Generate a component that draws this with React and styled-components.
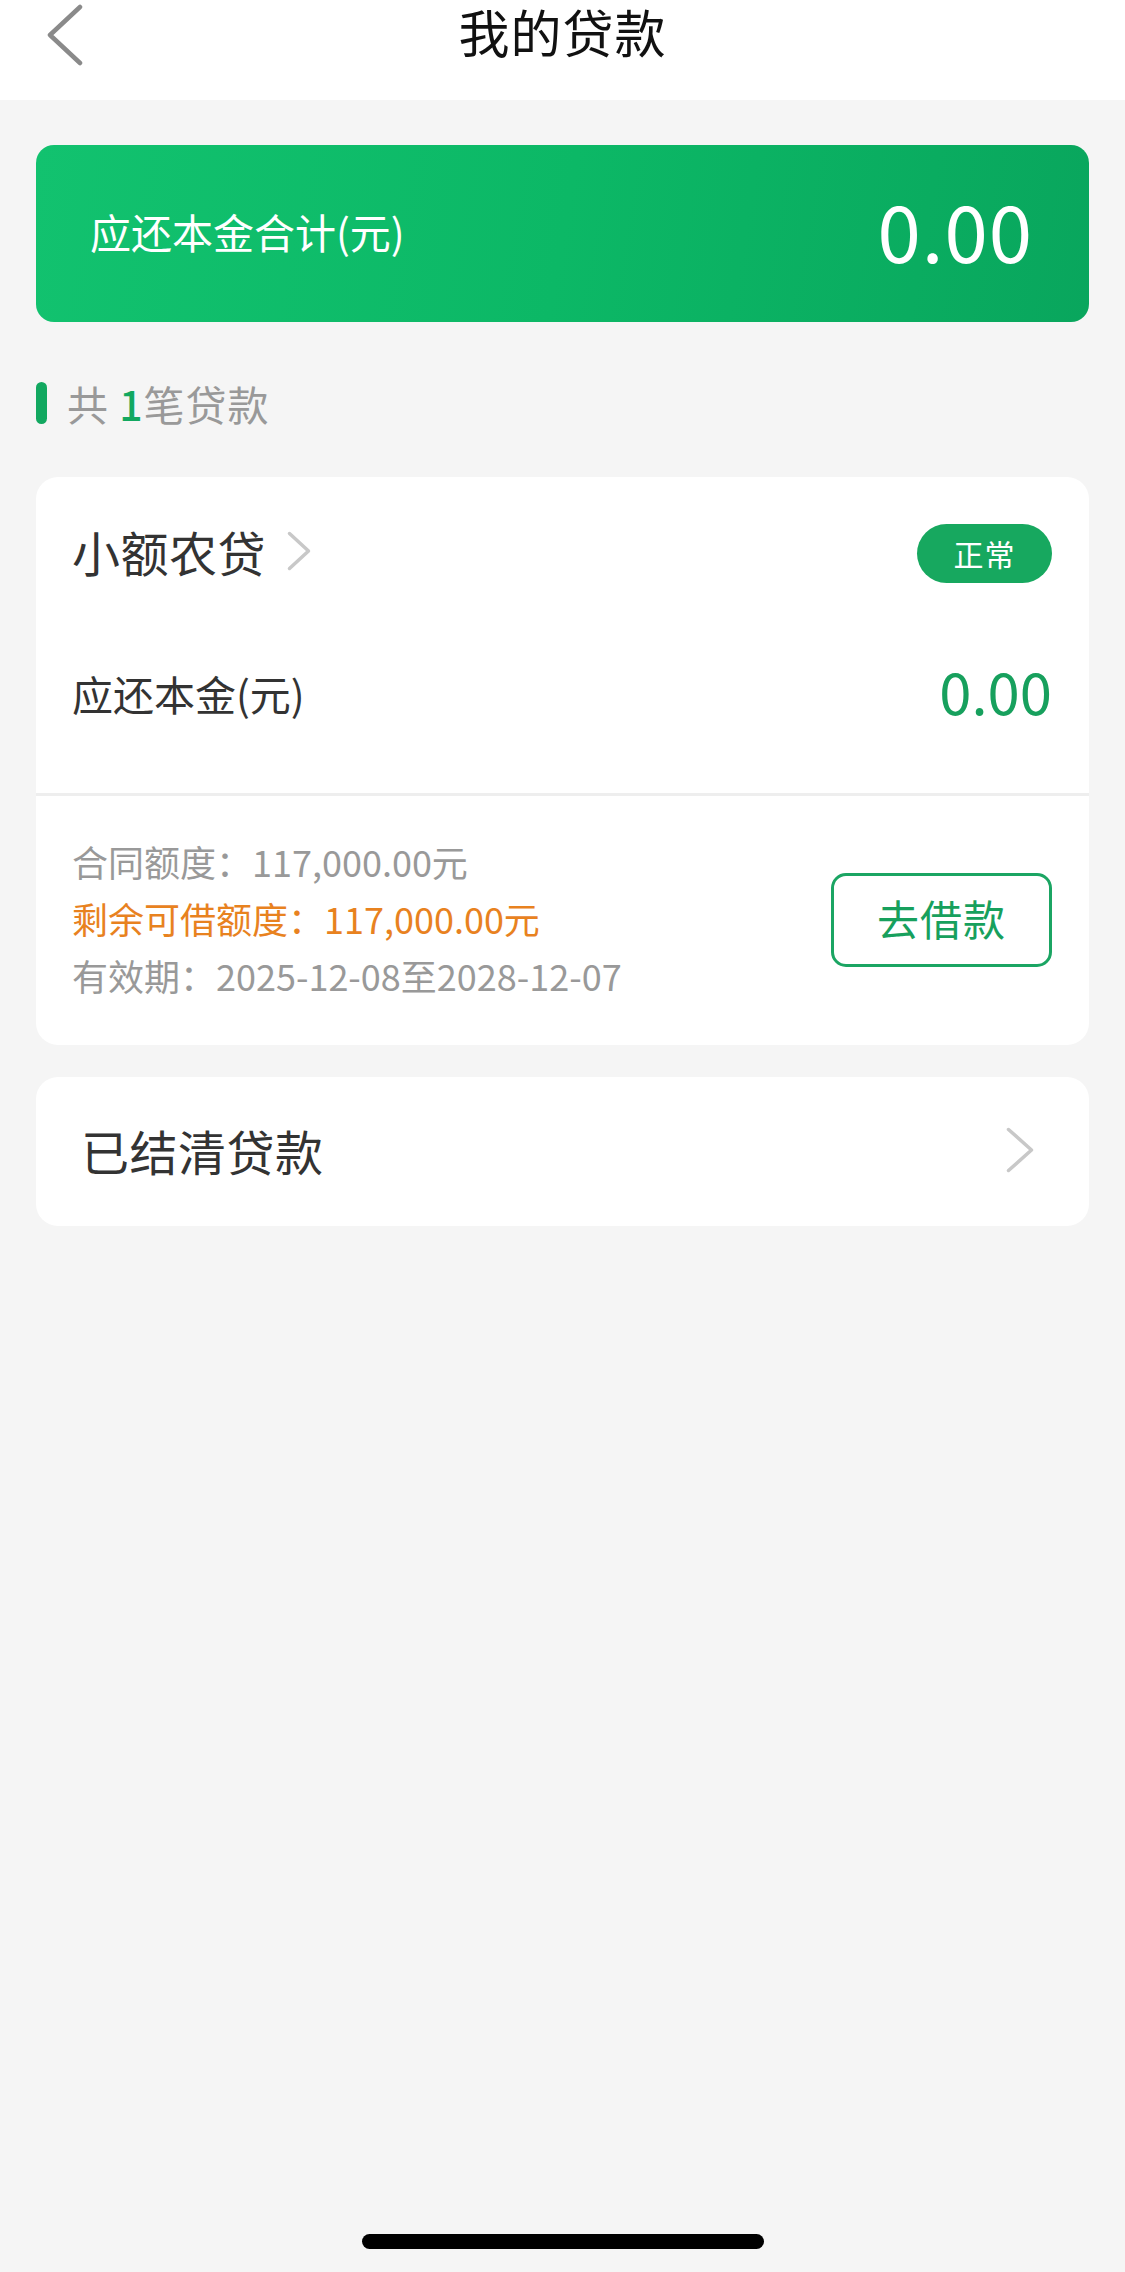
import React from "react";
import styled, { createGlobalStyle } from "styled-components";

const Global = createGlobalStyle`
  html, body { margin: 0; padding: 0; background: #f5f5f5; }
  body { font-family: "Noto Sans CJK SC", "Noto Sans", sans-serif; -webkit-font-smoothing: antialiased; }
  * { box-sizing: border-box; }
`;

const Page = styled.div`
  position: relative;
  width: 1125px;
  min-height: 2272px;
  background: #f5f5f5;
  overflow: hidden;
`;

const Header = styled.header`
  position: relative;
  height: 100px;
  background: #ffffff;
  display: flex;
  justify-content: center;
  align-items: flex-start;
`;

const BackButton = styled.button`
  position: absolute;
  left: 44px;
  top: 2px;
  width: 42px;
  height: 66px;
  padding: 0;
  border: 0;
  background: transparent;
  display: flex;
  align-items: center;
  justify-content: center;
`;

const Title = styled.h1`
  margin: 0;
  padding-top: 4px;
  font-size: 51px;
  line-height: 54px;
  font-weight: 400;
  color: #111;
  letter-spacing: 1px;
`;

const Main = styled.main`
  padding: 45px 36px 0;
  display: flex;
  flex-direction: column;
`;

const SummaryCard = styled.section`
  height: 177px;
  border-radius: 18px;
  background: linear-gradient(100deg, #12c26f 0%, #0cb866 50%, #09a65d 100%);
  display: flex;
  align-items: center;
  justify-content: space-between;
  padding: 0 56px 0 54px;
  color: #fff;
`;

const SummaryLabel = styled.span`
  font-size: 41px;
  font-weight: 400;
  margin-bottom: 6px;
`;

const SummaryValue = styled.span`
  font-size: 78px;
  font-weight: 400;
  letter-spacing: 1px;
  line-height: 1;
  margin-bottom: 10px;
`;

const SectionHead = styled.div`
  margin-top: 60px;
  height: 42px;
  display: flex;
  align-items: center;
  gap: 20px;
`;

const SectionBar = styled.span`
  width: 11px;
  height: 42px;
  border-radius: 6px;
  background: #12a860;
`;

const SectionText = styled.span`
  font-size: 41px;
  color: #999;
  line-height: 1;
  letter-spacing: 1px;
`;

const Count = styled.span`
  color: #12a860;
  font-weight: 500;
`;

const Card = styled.section`
  margin-top: ${(p) => p.$gap}px;
  background: #fff;
  border-radius: 22px;
  overflow: hidden;
`;

const CardTop = styled.div`
  padding: 44px 37px 70px 36px;
  display: flex;
  flex-direction: column;
  gap: 83px;
  border-bottom: 3px solid #eeeeee;
`;

const Row = styled.div`
  height: ${(p) => p.$h}px;
  display: flex;
  align-items: center;
  justify-content: space-between;
`;

const NameLink = styled.div`
  display: flex;
  align-items: center;
  gap: 20px;
`;

const Name = styled.span`
  font-size: 48px;
  color: #333;
  letter-spacing: 0.5px;
`;

const Badge = styled.span`
  width: 135px;
  height: 59px;
  border-radius: 30px;
  background: #17a85f;
  color: #fff;
  font-size: 30px;
  display: flex;
  align-items: center;
  justify-content: center;
  letter-spacing: 1px;
  margin-top: 5px;
`;

const RowLabel = styled.span`
  font-size: 41px;
  color: #333;
`;

const GreenAmount = styled.span`
  font-size: 58px;
  color: #17a05d;
  font-weight: 400;
  line-height: 1;
  margin-bottom: 6px;
`;

const CardBottom = styled.div`
  padding: 37px 37px 41px 36px;
  display: flex;
  align-items: center;
  justify-content: space-between;
`;

const InfoList = styled.div`
  display: flex;
  flex-direction: column;
`;

const InfoLine = styled.div`
  font-size: 36px;
  line-height: 57px;
  color: ${(p) => (p.$accent ? "#e8821f" : "#999")};
  white-space: nowrap;
`;

const BorrowButton = styled.button`
  width: 221px;
  height: 94px;
  border: 3px solid #1ba563;
  border-radius: 15px;
  background: #fff;
  color: #17a05d;
  font-family: inherit;
  font-size: 42px;
  padding: 0 0 4px;
  display: flex;
  align-items: center;
  justify-content: center;
  letter-spacing: 1px;
  margin-top: 2px;
`;

const SettledRow = styled.div`
  height: 149px;
  padding: 0 54px 4px 45px;
  display: flex;
  align-items: center;
  justify-content: space-between;
`;

const SettledText = styled.span`
  font-size: 48px;
  color: #333;
  letter-spacing: 0.5px;
`;

const HomeIndicator = styled.div`
  position: absolute;
  left: 362px;
  bottom: 23px;
  width: 402px;
  height: 15px;
  border-radius: 8px;
  background: #000;
`;

const Chevron = ({ w, h, color, sw }) => (
  <svg width={w} height={h} viewBox={`0 0 ${w} ${h}`} fill="none">
    <polyline
      points={`${sw},${sw} ${w - sw},${h / 2} ${sw},${h - sw}`}
      stroke={color}
      strokeWidth={sw}
      strokeLinecap="round"
      strokeLinejoin="round"
    />
  </svg>
);

const BackIcon = () => (
  <svg width="36" height="62" viewBox="0 0 36 62" fill="none">
    <polyline
      points="33,3 3,31 33,59"
      stroke="#8a8a8a"
      strokeWidth="4.5"
      strokeLinecap="round"
      strokeLinejoin="round"
    />
  </svg>
);

export default function App() {
  return (
    <Page>
      <Global />
      <Header>
        <BackButton aria-label="back">
          <BackIcon />
        </BackButton>
        <Title>我的贷款</Title>
      </Header>
      <Main>
        <SummaryCard>
          <SummaryLabel>应还本金合计(元)</SummaryLabel>
          <SummaryValue>0.00</SummaryValue>
        </SummaryCard>

        <SectionHead>
          <SectionBar />
          <SectionText>
            共 <Count>1</Count>笔贷款
          </SectionText>
        </SectionHead>

        <Card $gap={53}>
          <CardTop>
            <Row $h={59}>
              <NameLink>
                <Name>小额农贷</Name>
                <Chevron w={26} h={42} color="#c8c8c8" sw={3.5} />
              </NameLink>
              <Badge>正常</Badge>
            </Row>
            <Row $h={60}>
              <RowLabel>应还本金(元)</RowLabel>
              <GreenAmount>0.00</GreenAmount>
            </Row>
          </CardTop>
          <CardBottom>
            <InfoList>
              <InfoLine>合同额度：117,000.00元</InfoLine>
              <InfoLine $accent>剩余可借额度：117,000.00元</InfoLine>
              <InfoLine>有效期：2025-12-08至2028-12-07</InfoLine>
            </InfoList>
            <BorrowButton>去借款</BorrowButton>
          </CardBottom>
        </Card>

        <Card $gap={32}>
          <SettledRow>
            <SettledText>已结清贷款</SettledText>
            <Chevron w={30} h={48} color="#c8c8c8" sw={3.5} />
          </SettledRow>
        </Card>
      </Main>
      <HomeIndicator />
    </Page>
  );
}
